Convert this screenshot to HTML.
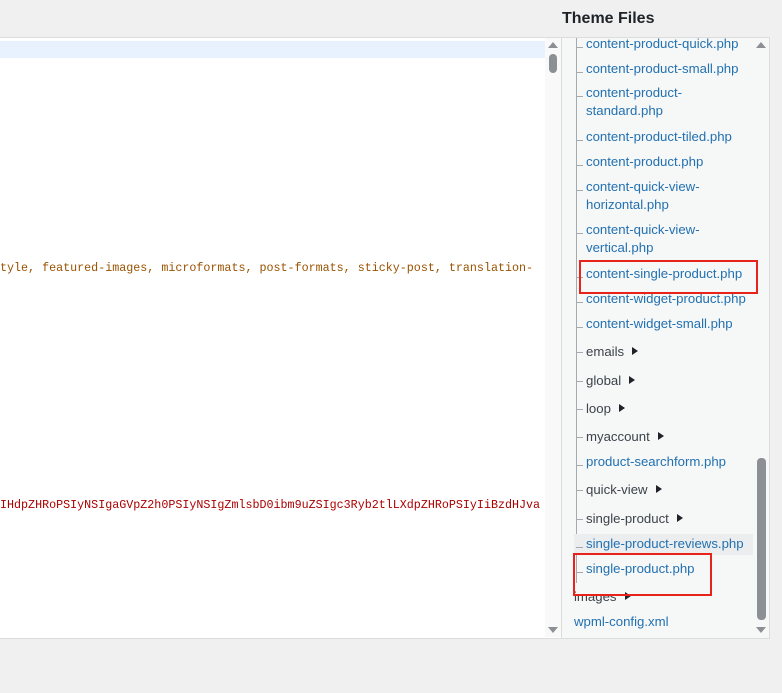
<!DOCTYPE html>
<html><head><meta charset="utf-8"><style>
body{margin:0;width:782px;height:693px;background:#f0f0f1;position:relative;overflow:hidden;font-family:"Segoe UI","Liberation Sans",sans-serif}
.a{position:absolute}
.t{position:absolute;left:586px;font-size:13.2px;line-height:18px;color:#2271b1;white-space:nowrap;margin-top:1px}
.d{color:#3c434a}
.tk{position:absolute;left:576px;width:7px;height:1px;background:#a7aaad}
.tri{display:inline-block;width:0;height:0;border-left:6px solid #1d2327;border-top:4px solid transparent;border-bottom:4px solid transparent;margin-left:8px;vertical-align:1px}
.code{position:absolute;left:0;font-family:"Liberation Mono",monospace;font-size:11.7px;white-space:nowrap}
.up,.dn{position:absolute;width:0;height:0;border-left:5px solid transparent;border-right:5px solid transparent}
.up{border-bottom:6px solid #8c8f94}.dn{border-top:6px solid #8c8f94}
</style></head><body>
<div class="a" style="left:562px;top:10px;font-size:16px;font-weight:600;color:#1d2327">Theme Files</div>
<div class="a" style="left:-1px;top:37px;width:561px;height:600px;background:#fff;border:1px solid #dcdcde"></div>
<div class="a" style="left:0;top:41px;width:545px;height:17px;background:#e8f2ff"></div>
<div class="a" style="left:545px;top:38px;width:16px;height:599px;background:#f9f9f9"></div>
<div class="up" style="left:548px;top:42px"></div>
<div class="a" style="left:549px;top:54px;width:8px;height:19px;border-radius:4px;background:#8c8f94"></div>
<div class="dn" style="left:548px;top:627px"></div>
<div class="code" style="top:261px;color:#9a5200">tyle, featured-images, microformats, post-formats, sticky-post, translation-</div>
<div class="code" style="top:498px;color:#a00">IHdpZHRoPSIyNSIgaGVpZ2h0PSIyNSIgZmlsbD0ibm9uZSIgc3Ryb2tlLXdpZHRoPSIyIiBzdHJva</div>
<div class="a" style="left:561px;top:37px;width:207px;height:600px;background:#f6f7f7;border:1px solid #dcdcde"></div>
<div class="a" style="left:753px;top:38px;width:16px;height:599px;background:#f6f7f7"></div>
<div class="up" style="left:756px;top:42px"></div>
<div class="a" style="left:757px;top:458px;width:9px;height:162px;border-radius:4px;background:#8c8f94"></div>
<div class="dn" style="left:756px;top:627px"></div>
<div class="a" style="left:576px;top:38px;width:1px;height:545px;background:#a7aaad"></div>
<div class="a" style="left:574px;top:534px;width:179px;height:21px;background:#ebedee"></div>
<div class="tk" style="top:47px"></div><div class="t" style="top:34px">content-product-quick.php</div>
<div class="tk" style="top:72px"></div><div class="t" style="top:59px">content-product-small.php</div>
<div class="tk" style="top:96px"></div><div class="t" style="top:83px">content-product-<br>standard.php</div>
<div class="tk" style="top:140px"></div><div class="t" style="top:127px">content-product-tiled.php</div>
<div class="tk" style="top:165px"></div><div class="t" style="top:152px">content-product.php</div>
<div class="tk" style="top:190px"></div><div class="t" style="top:177px">content-quick-view-<br>horizontal.php</div>
<div class="tk" style="top:233px"></div><div class="t" style="top:220px">content-quick-view-<br>vertical.php</div>
<div class="tk" style="top:277px"></div><div class="t" style="top:264px">content-single-product.php</div>
<div class="tk" style="top:302px"></div><div class="t" style="top:289px">content-widget-product.php</div>
<div class="tk" style="top:327px"></div><div class="t" style="top:314px">content-widget-small.php</div>
<div class="tk" style="top:352px"></div><div class="t d" style="top:342px">emails<span class="tri"></span></div>
<div class="tk" style="top:381px"></div><div class="t d" style="top:371px">global<span class="tri"></span></div>
<div class="tk" style="top:409px"></div><div class="t d" style="top:399px">loop<span class="tri"></span></div>
<div class="tk" style="top:437px"></div><div class="t d" style="top:427px">myaccount<span class="tri"></span></div>
<div class="tk" style="top:465px"></div><div class="t" style="top:452px">product-searchform.php</div>
<div class="tk" style="top:490px"></div><div class="t d" style="top:480px">quick-view<span class="tri"></span></div>
<div class="tk" style="top:519px"></div><div class="t d" style="top:509px">single-product<span class="tri"></span></div>
<div class="tk" style="top:547px"></div><div class="t" style="top:534px">single-product-reviews.php</div>
<div class="tk" style="top:572px"></div><div class="t" style="top:559px">single-product.php</div>
<div class="t d" style="top:587px;left:574px">images<span class="tri"></span></div>
<div class="t" style="top:612px;left:574px">wpml-config.xml</div>
<div class="a" style="left:579px;top:260px;width:175px;height:30px;border:2px solid #e8231b"></div>
<div class="a" style="left:573px;top:553px;width:135px;height:39px;border:2px solid #e8231b"></div>
</body></html>
